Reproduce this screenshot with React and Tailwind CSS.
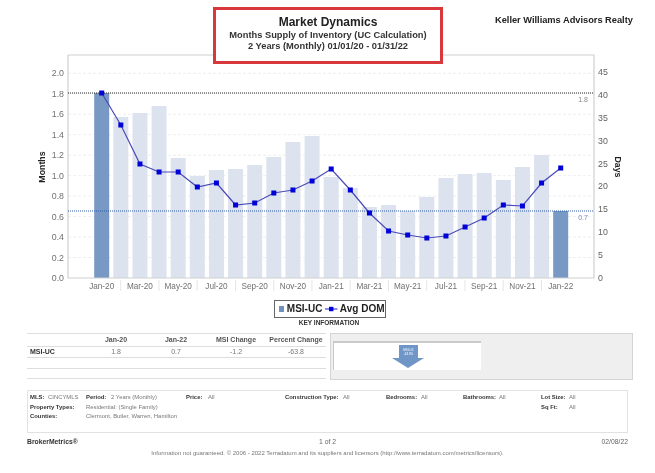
const bars = [93, 117, 113, 106, 158, 176, 170, 169, 165, 157, 142, 136, 177, 188, 207, 205, 211, 197, 178, 174, 173, 180, 167, 155, 211];
const line = [93, 125, 164, 172, 172, 187, 183, 205, 203, 193, 190, 181, 169, 190, 213, 231, 235, 238, 236, 227, 218, 205, 206, 183, 168];
const monthLabels = ["Jan-20", "Mar-20", "May-20", "Jul-20", "Sep-20", "Nov-20", "Jan-21", "Mar-21", "May-21", "Jul-21", "Sep-21", "Nov-21", "Jan-22"];
const left = ["0.0", "0.2", "0.4", "0.6", "0.8", "1.0", "1.2", "1.4", "1.6", "1.8", "2.0"];
const right = [0, 5, 10, 15, 20, 25, 30, 35, 40, 45];

const barX = (i) => 101.7 + i * 19.125;
const points = line.map((y, i) => `${barX(i)},${y}`).join(" ");

function Chart() {
  return (
    <svg width="655" height="245" viewBox="0 52 655 245" className="block">
      {left.map((l, i) => {
        const y = 278 - i * 20.47;
        return (
          <g key={l}>
            {i > 0 && <line x1="68" x2="594" y1={y} y2={y} stroke="#e6e6e6" strokeWidth="0.7" strokeDasharray="3 2" />}
            <text x="64" y={y + 3} textAnchor="end" fontSize="8.8" fill="#707070">{l}</text>
          </g>
        );
      })}
      {right.map((r, i) => (
        <text key={r} x="598" y={278 - i * 22.9 + 3} fontSize="8.8" fill="#606060">{r}</text>
      ))}
      {bars.map((y, i) => {
        const strong = i === 0 || i === 24;
        return <rect key={i} x={barX(i) - 7.5} y={y} width="15" height={278 - y} fill={strong ? "#7899c4" : "#dce3ee"} />;
      })}
      <path d="M68 55V278H594V55H68" fill="none" stroke="#d0d0d0" strokeWidth="1.2" />
      <line x1="68" x2="594" y1="93" y2="93" stroke="#222" strokeWidth="1" strokeDasharray="1 1" />
      <line x1="68" x2="594" y1="211" y2="211" stroke="#2f5aa8" strokeWidth="1" strokeDasharray="1 1" />
      <polyline points={points} fill="none" stroke="#4a4ab8" strokeWidth="1.2" />
      {line.map((y, i) => (
        <rect key={i} x={barX(i) - 2.5} y={y - 2.5} width="5" height="5" fill="#0000d8" />
      ))}
      {monthLabels.map((m, i) => (
        <g key={m}>
          <text x={barX(i * 2)} y="289" textAnchor="middle" fontSize="8.2" fill="#707070">{m}</text>
          {i < 12 && <line x1={barX(i * 2) + 19} x2={barX(i * 2) + 19} y1="280" y2="291" stroke="#e0e0e0" strokeWidth="0.8" />}
        </g>
      ))}
      <text x="583" y="102" textAnchor="middle" fontSize="7" fill="#888">1.8</text>
      <text x="583" y="220" textAnchor="middle" fontSize="7" fill="#7a86c8">0.7</text>
      <text transform="translate(45 167) rotate(-90)" textAnchor="middle" fontSize="8.8" fontWeight="700" fill="#222">Months</text>
      <text transform="translate(615 167) rotate(90)" textAnchor="middle" fontSize="8.8" fontWeight="700" fill="#222">Days</text>
    </svg>
  );
}

function Legend() {
  return (
    <div className="flex justify-center pl-[4px]">
      <div className="flex items-center w-[112px] h-[18px] border border-[#666] pl-[4px] text-[10px] font-bold text-[#222] leading-none whitespace-nowrap">
        <span className="w-[6px] h-[6px] bg-[#7092bf] mr-[3px]" />
        <span>MSI-UC</span>
        <svg width="14" height="8" viewBox="0 0 14 8" className="ml-[3px]">
          <line x1="0" x2="14" y1="4" y2="4" stroke="#0000d8" strokeWidth="1" />
          <rect x="4.5" y="1.5" width="5" height="5" fill="#0000d8" />
        </svg>
        <span className="ml-[2px]">Avg DOM</span>
      </div>
    </div>
  );
}

function SummaryTable() {
  const cols = "grid grid-cols-[59px_60px_60px_60px_60px] items-center text-center";
  return (
    <div className="w-[299px] text-[7px] text-[#777]">
      <div className={`${cols} h-[14px] border-t border-b border-[#ddd] font-bold text-[#555]`}>
        <span />
        <span>Jan-20</span>
        <span>Jan-22</span>
        <span>MSI Change</span>
        <span>Percent Change</span>
      </div>
      <div className={`${cols} h-[11px] border-b border-[#ddd]`}>
        <span className="text-left pl-[3px] font-bold text-[#333]">MSI-UC</span>
        <span>1.8</span>
        <span>0.7</span>
        <span>-1.2</span>
        <span>-63.8</span>
      </div>
      <div className="h-[11px] border-b border-[#ddd]" />
      <div className="h-[10px] border-b border-[#ddd]" />
    </div>
  );
}

function ArrowPanel() {
  return (
    <div className="w-[303px] h-[47px] bg-[#efefef] border border-[#d4d4d4] pt-[7px] pl-[2px]">
      <div className="flex justify-center w-[148px] h-[29px] bg-white border-t-2 border-l border-[#c9c9c9]">
        <svg width="32" height="24" viewBox="0 0 32 24" className="mt-[1px]">
          <path d="M7 1H26V14H32L16 24L0 14H7Z" fill="#6f96c6" />
          <text x="16.5" y="7" textAnchor="middle" fontSize="3" fill="#fff">MSI-UC</text>
          <text x="16.5" y="11" textAnchor="middle" fontSize="3" fill="#fff">-63.8%</text>
        </svg>
      </div>
    </div>
  );
}

function Field({ label, value, labelWidth }) {
  return (
    <div className="flex whitespace-nowrap">
      <span className={`font-bold text-[#333] ${labelWidth}`}>{label}</span>
      <span>{value}</span>
    </div>
  );
}

function Criteria() {
  return (
    <div className="mx-[27px] mt-[10px] h-[43px] border border-[#e2e2e2] pt-[2px] pl-[2px] text-[5.9px] leading-[9.5px] text-[#777]">
      <div className="grid grid-cols-[56px_100px_99px_101px_77px_78px_1fr]">
        <Field label="MLS:" value="CINCYMLS" labelWidth="w-[18px]" />
        <Field label="Period:" value="2 Years (Monthly)" labelWidth="w-[25px]" />
        <Field label="Price:" value="All" labelWidth="w-[22px]" />
        <Field label="Construction Type:" value="All" labelWidth="w-[58px]" />
        <Field label="Bedrooms:" value="All" labelWidth="w-[35px]" />
        <Field label="Bathrooms:" value="All" labelWidth="w-[36px]" />
        <Field label="Lot Size:" value="All" labelWidth="w-[28px]" />
        <span className="font-bold text-[#333] whitespace-nowrap">Property Types:</span>
        <span className="col-span-5">Residential: (Single Family)</span>
        <Field label="Sq Ft:" value="All" labelWidth="w-[28px]" />
        <span className="font-bold text-[#333]">Counties:</span>
        <span className="col-span-6">Clermont, Butler, Warren, Hamilton</span>
      </div>
    </div>
  );
}

export default function App() {
  return (
    <div className="w-[655px] h-[473px] overflow-hidden bg-white blur-[0.4px] font-['Liberation_Sans',Arial,sans-serif]">
      <div className="flex h-[52px] items-start">
        <div className="relative z-10 ml-[213px] mt-[7px] w-[230px] h-[57px] border-[3px] border-[#d8383c] bg-white text-center font-bold text-[#222]">
          <div className="text-[12px] leading-[14px] mt-[5px]">Market Dynamics</div>
          <div className="text-[9.3px] leading-[12px] text-[#333]">Months Supply of Inventory (UC Calculation)</div>
          <div className="text-[9.3px] leading-[11px] text-[#333]">2 Years (Monthly) 01/01/20 - 01/31/22</div>
        </div>
        <div className="ml-[52px] mt-[14px] text-[9.25px] leading-[12px] font-bold text-[#222] whitespace-nowrap">Keller Williams Advisors Realty</div>
      </div>
      <Chart />
      <div className="mt-[3px]">
        <Legend />
      </div>
      <div className="mt-[1px] text-center text-[6.5px] leading-[8px] font-bold text-[#333] pl-[3px]">KEY INFORMATION</div>
      <div className="flex gap-[4px] ml-[27px] mt-[6px]">
        <SummaryTable />
        <ArrowPanel />
      </div>
      <Criteria />
      <div className="grid grid-cols-3 items-center mx-[27px] mt-[4px] text-[6.8px] leading-[10px] text-[#666]">
        <span className="font-bold text-[#333]">BrokerMetrics®</span>
        <span className="text-center">1 of 2</span>
        <span className="text-right">02/08/22</span>
      </div>
      <div className="mt-[2px] text-center text-[6px] leading-[8px] text-[#777]">
        Information not guaranteed. © 2006 - 2022 Terradatum and its suppliers and licensors (http://www.terradatum.com/metrics/licensors).
      </div>
    </div>
  );
}
